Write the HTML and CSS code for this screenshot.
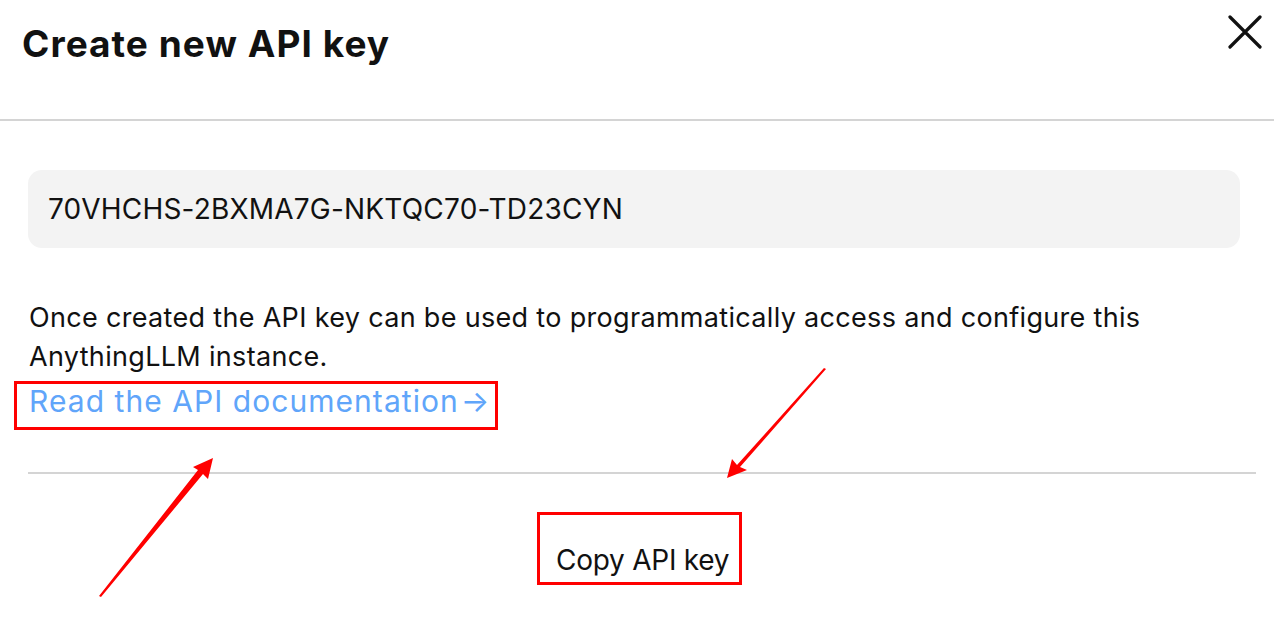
FILE: index.html
```html
<!DOCTYPE html>
<html lang="en">
<head>
<meta charset="utf-8">
<title>Create new API key</title>
<link rel="stylesheet" href="styles.css">
</head>
<body>
<div class="modal">
  <header class="modal-header">
    <h1 class="modal-title">Create new API key</h1>
    <button class="close-btn" aria-label="Close">
      <svg width="34" height="34" viewBox="0 0 34 34"><path d="M2 2 L32 32 M32 2 L2 32" stroke="#111" stroke-width="3.2" stroke-linecap="round" fill="none"/></svg>
    </button>
  </header>
  <section class="modal-body">
    <div class="key-box">70VHCHS-2BXMA7G-NKTQC70-TD23CYN</div>
    <p class="desc">Once created the API key can be used to programmatically access and configure this AnythingLLM instance.</p>
    <div class="annot annot-link"><a class="doc-link" href="#">Read the API documentation<span class="arrow">→</span></a></div>
  </section>
  <footer class="modal-footer">
    <div class="annot annot-btn"><button class="copy-btn">Copy API key</button></div>
  </footer>
</div>
<svg class="arrows" width="1274" height="632" viewBox="0 0 1274 632">
  <polygon points="99,596 198,470 193,467 213,458 208,479 203,474 101,597" fill="#ff0000"/>
  <polygon points="826,369 740,467 747,470 727,478 732,459 737,465 824,368" fill="#ff0000"/>
</svg>
</body>
</html>
```

FILE: styles.css
```css
* { box-sizing: border-box; }
html, body { margin: 0; padding: 0; background: #fff; }
body {
  font-family: "Inter", "Liberation Sans", sans-serif;
  color: #111;
  width: 1274px;
  height: 632px;
  overflow: hidden;
  position: relative;
}
.modal { width: 1274px; }
.modal-header {
  display: flex;
  justify-content: space-between;
  align-items: flex-start;
  height: 121px;
  border-bottom: 2px solid #d4d4d4;
}
.modal-title {
  margin: 20px 0 0 22px;
  font-size: 37px;
  font-weight: 700;
  letter-spacing: 1.05px;
  line-height: 48px;
}
.close-btn {
  margin: 15px 12px 0 0;
  padding: 0;
  border: 0;
  background: none;
  width: 34px;
  height: 34px;
}
.modal-body {
  padding: 49px 34px 0 28px;
}
.key-box {
  height: 78px;
  background: #f3f3f3;
  border-radius: 14px;
  padding: 0 20px;
  display: flex;
  align-items: center;
  font-size: 28px;
  letter-spacing: 0.2px;
  color: #111;
}
.desc {
  margin: 50px 0 0 1px;
  font-size: 27px;
  letter-spacing: 0.32px;
  line-height: 39px;
}
.annot {
  display: inline-block;
  border: 3px solid #ff0000;
}
.annot-link {
  margin: 5px 0 0 -14px;
  padding: 2px 6px 11px 12px;
}
.doc-link {
  display: block;
  color: #60a5fa;
  text-decoration: none;
  font-size: 30px;
  letter-spacing: 1.05px;
  line-height: 30px;
}
.arrow {
  letter-spacing: 0;
  margin-left: 2px;
}
.modal-footer {
  margin: 42px 18px 0 28px;
  border-top: 2px solid #d4d4d4;
  display: flex;
  justify-content: center;
  padding-top: 38px;
}
.annot-btn {
  width: 205px;
  height: 73px;
  padding: 26px 0 0 16px;
  margin-right: 5px;
}
.copy-btn {
  display: block;
  border: 0;
  background: none;
  padding: 0;
  font-family: inherit;
  font-size: 28px;
  letter-spacing: -0.25px;
  color: #111;
  line-height: 38px;
}
.arrows {
  position: absolute;
  left: 0;
  top: 0;
  pointer-events: none;
}
```
